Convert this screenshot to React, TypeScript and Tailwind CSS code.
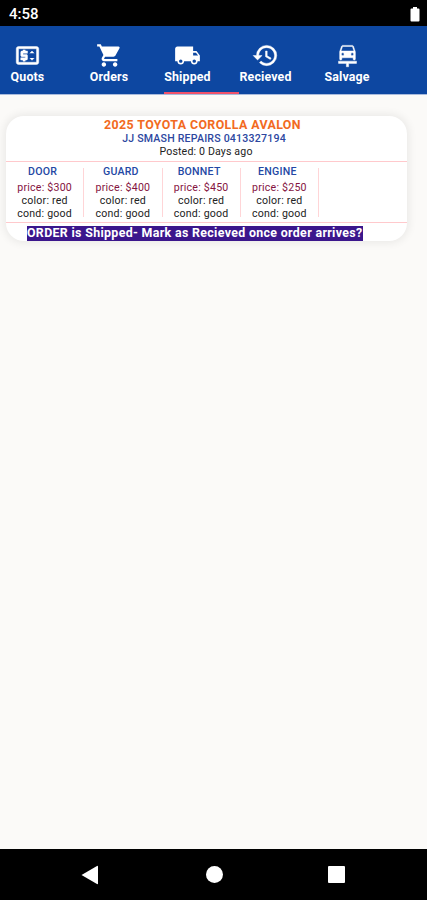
import type { ComponentType } from "react";
import { clsx } from "clsx";
import { MdCarRepair, MdHistory, MdLocalShipping, MdOutlinePriceChange, MdShoppingCart } from "react-icons/md";

type Tab = {
  label: string;
  icon: ComponentType<{ className?: string }>;
  cell: string;
  text: string;
  heavy?: boolean;
};

const tabs: Tab[] = [
  { label: "Quots", icon: MdOutlinePriceChange, cell: "w-[69px] pl-2.5", text: "w-[35px]", heavy: true },
  { label: "Orders", icon: MdShoppingCart, cell: "w-[95px] pl-5", text: "w-[40px]" },
  { label: "Shipped", icon: MdLocalShipping, cell: "w-[75px]", text: "w-[47px]" },
  { label: "Recieved", icon: MdHistory, cell: "w-[75px]", text: "w-[53px]", heavy: true },
  { label: "Salvage", icon: MdCarRepair, cell: "w-[75px] pl-2.5", text: "w-[46px]", heavy: true },
];

const parts = [
  { name: "DOOR", price: 300 },
  { name: "GUARD", price: 400 },
  { name: "BONNET", price: 450 },
  { name: "ENGINE", price: 250 },
];

const StatusBar = () => (
  <div className="flex h-[26px] shrink-0 items-center justify-between bg-black pl-[9px] pr-[7px] text-white">
    <span className="pt-0.5 text-[15px] font-medium leading-none">4:58</span>
    <svg width="10" height="15" viewBox="0 0 10 15" className="mt-0.5 fill-white">
      <path d="M3 0h4v1.5h1.5q1 0 1 1v11q0 1-1 1h-7q-1 0-1-1v-11q0-1 1-1H3z" />
    </svg>
  </div>
);

const TabBar = () => (
  <div className="flex h-[69px] shrink-0 border-b border-[#a9bbdc] bg-[#0d47a1] text-white">
    {tabs.map(({ label, icon: Icon, cell, text, heavy }) => (
      <div key={label} className="flex shrink-0 flex-col justify-between pt-4">
        <div className={cell}>
          <div className={clsx("flex flex-col items-center", text)}>
            <Icon
              className={clsx("size-[27px] shrink-0", heavy && "stroke-white stroke-[0.4] [&_[fill=none]]:stroke-none")}
            />
            <span className="whitespace-nowrap text-[12.4px] font-bold leading-[15px] tracking-[0.15px]">{label}</span>
          </div>
        </div>
        {label === "Shipped" && <div className="h-0.5 w-[75px] bg-[#f0526a]" />}
      </div>
    ))}
  </div>
);

const OrderCard = () => (
  <div className="ml-1.5 mt-[21px] h-[125px] w-[401px] overflow-hidden rounded-[18px] bg-white shadow-[0_0_8px_2px_rgba(0,0,0,0.07)]">
    <div className="flex h-[46px] flex-col items-center border-b border-[#ffc9cc] pr-2 pt-px">
      <span className="text-[12.4px] font-bold leading-[15px] tracking-[0.4px] text-[#f26a21]">
        2025 TOYOTA COROLLA AVALON
      </span>
      <span className="pl-[3px] text-[10.6px] font-medium leading-[13px] tracking-[0.2px] text-[#2d479f]">
        JJ SMASH REPAIRS 0413327194
      </span>
      <span className="pl-[7px] text-[10.6px] leading-[13px] tracking-[0.15px] text-[#222]">Posted: 0 Days ago</span>
    </div>
    <div className="flex h-[61px] border-b border-[#ffc9cc] pt-1.5">
      {parts.map((part) => (
        <div
          key={part.name}
          className="flex h-[49px] w-[78.25px] flex-col items-center border-r border-[#ffd5d7] text-[10.6px] leading-[13px] tracking-[0.22px] text-[#222]"
        >
          <span className="-mt-[3px] mb-[3px] pr-1 font-medium text-[#2448a4]">{part.name}</span>
          <span className="text-[#85143f]">price: ${part.price}</span>
          <span>color: red</span>
          <span>cond: good</span>
        </div>
      ))}
    </div>
    <div className="ml-[21px] mt-[3px] h-[15px] w-[336px] whitespace-nowrap bg-[#3b168c] text-[12.4px] font-bold leading-[14px] tracking-[0.33px] text-white">
      ORDER is Shipped- Mark as Recieved once order arrives?
    </div>
  </div>
);

const NavBar = () => (
  <div className="flex h-[51px] shrink-0 items-center bg-black pl-[80.5px]">
    <svg width="18" height="20" viewBox="0 0 18 20" className="fill-white">
      <path d="M.5 10 16 1q1-.5 1 .5v17q0 1-1 .5z" />
    </svg>
    <div className="ml-[107px] size-[17px] rounded-full bg-white" />
    <div className="ml-[105.5px] size-[17px] rounded-[1px] bg-white" />
  </div>
);

export default function App() {
  return (
    <div className="flex h-[900px] w-[427px] flex-col overflow-hidden bg-[#fbfaf8] font-['Roboto',sans-serif]">
      <StatusBar />
      <TabBar />
      <main className="flex-1">
        <OrderCard />
      </main>
      <NavBar />
    </div>
  );
}
